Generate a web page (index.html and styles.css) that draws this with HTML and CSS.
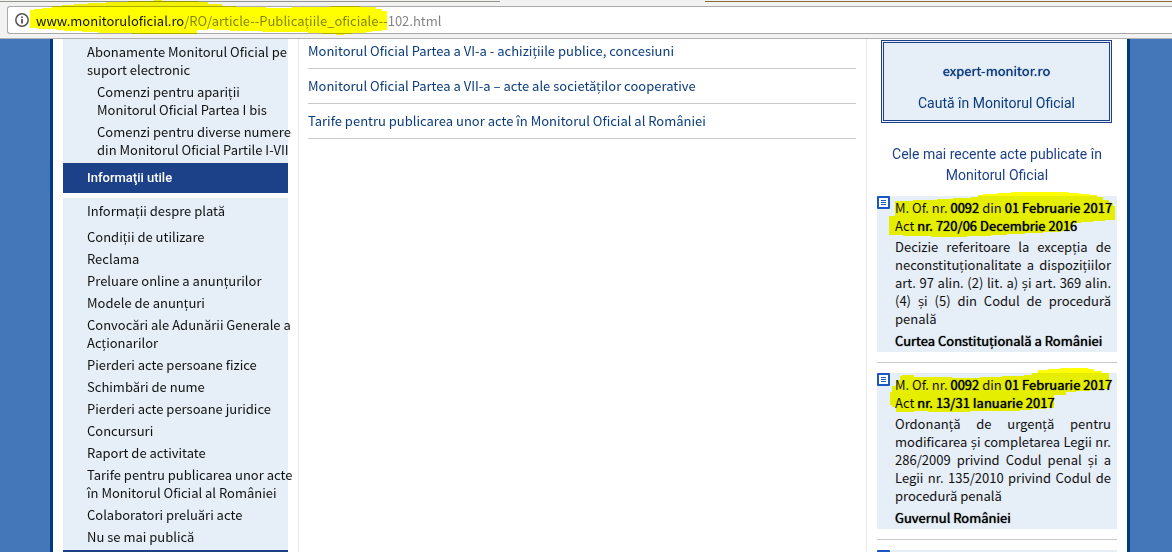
FILE: index.html
```
<!DOCTYPE html>
<html lang="ro">
<head>
    <meta charset="UTF-8">
    <meta name="viewport" content="width=device-width, initial-scale=1.0">
    <title>Monitorul Oficial</title>
    <link rel="stylesheet" href="styles.css">
</head>
<body>
    <header class="toolbar">
        <div class="tabs-edge"><span class="edge-left"></span><span class="edge-right"></span></div>
        <div class="omnibox">
            <svg class="info-icon" viewBox="0 0 14 14" aria-hidden="true">
                <circle cx="7" cy="7" r="6.2" fill="none" stroke="#555" stroke-width="1.5"/>
                <path d="M6.1 6h1.8v4.5H6.1zM6.1 3.4h1.8v1.7H6.1z" fill="#555"/>
            </svg>
            <input class="url" type="text" aria-label="Adresa" value="www.monitoruloficial.ro/RO/article--Publicațiile_oficiale--102.html">
        </div>
        <svg class="marker marker-url" viewBox="0 0 358 36" aria-hidden="true">
            <path d="M0 10H4V9H12V8H22V6H32V5H44V4H58V3H76V2H98V1H124V0H132V1H168V2H178V4H192V6H206V7H236V8H262V7H300V6H330V7H346V9H352V11H357V30H352V31H342V32H336V33H322V34H314V35H306V34H292V33H278V32H232V31H200V30H184V29H178V30H167V34H102V33H68V32H52V31H34V30H26V29H8V28H0Z"/>
        </svg>
    </header>

    <div class="viewport">
        <div class="page">
            <nav class="sidebar">
                <ul class="menu">
                    <li><a href="#">Abonamente Monitorul Oficial pe<br>suport electronic</a></li>
                    <li class="sub"><a href="#">Comenzi pentru apariţii<br>Monitorul Oficial Partea I bis</a></li>
                    <li class="sub"><a href="#">Comenzi pentru diverse numere<br>din Monitorul Oficial Partile I-VII</a></li>
                </ul>
                <h3 class="menu-title">Informaţii utile</h3>
                <ul class="menu">
                    <li class="spaced"><a href="#">Informaţii despre plată</a></li>
                    <li><a href="#">Condiţii de utilizare</a></li>
                    <li><a href="#">Reclama</a></li>
                    <li><a href="#">Preluare online a anunţurilor</a></li>
                    <li><a href="#">Modele de anunţuri</a></li>
                    <li><a href="#">Convocări ale Adunării Generale a<br>Acţionarilor</a></li>
                    <li><a href="#">Pierderi acte persoane fizice</a></li>
                    <li><a href="#">Schimbări de nume</a></li>
                    <li><a href="#">Pierderi acte persoane juridice</a></li>
                    <li><a href="#">Concursuri</a></li>
                    <li><a href="#">Raport de activitate</a></li>
                    <li><a href="#">Tarife pentru publicarea unor acte<br>în Monitorul Oficial al României</a></li>
                    <li><a href="#">Colaboratori preluări acte</a></li>
                    <li><a href="#">Nu se mai publică</a></li>
                </ul>
                <div class="menu-title"></div>
            </nav>

            <main class="content">
                <ul class="articles">
                    <li><a href="#">Monitorul Oficial Partea a VI-a - achiziţiile publice, concesiuni</a></li>
                    <li><a href="#">Monitorul Oficial Partea a VII-a – acte ale societăților cooperative</a></li>
                    <li><a href="#">Tarife pentru publicarea unor acte în Monitorul Oficial al României</a></li>
                </ul>
            </main>

            <aside class="right">
                <div class="search-box">
                    <a class="expert" href="#">expert-monitor.ro</a>
                    <a class="search-link" href="#">Caută în Monitorul Oficial</a>
                </div>
                <h2 class="recent-title">Cele mai recente acte publicate în<br>Monitorul Oficial</h2>

                <article class="act">
                    <svg class="act-icon" viewBox="0 0 13 13" aria-hidden="true">
                        <rect width="13" height="13" rx="1" fill="#1a56c4"/>
                        <path d="M2 2h9v9H2z" fill="#fff"/>
                        <path d="M4 4h5v1H4zM4 6h5v1H4zM4 8h5v1H4z" fill="#1a56c4"/>
                    </svg>
                    <p class="act-ref">M. Of. nr. <b>0092</b> din <b>01 Februarie 2017</b><br>Act <b>nr. 720/06 Decembrie 2016</b></p>
                    <p class="act-text">Decizie referitoare la excepţia de neconstituţionalitate a dispoziţiilor art. 97 alin. (2) lit. a) şi art. 369 alin. (4) şi (5) din Codul de procedură penală</p>
                    <p class="act-author">Curtea Constituţională a României</p>
                    <svg class="marker marker-first" viewBox="0 0 226 46" aria-hidden="true">
                        <path d="M6 9H24V8H48V7H64V6H82V5H89V3H94V2H108V1H122V0H180V1H190V2H200V3H208V5H214V8H220V11H224V14H226V28H216V29H204V30H192V31H184V33H181V39H172V40H154V41H136V42H118V43H102V44H78V45H42V44H14V43H0V24H6Z"/>
                    </svg>
                </article>

                <article class="act">
                    <svg class="act-icon" viewBox="0 0 13 13" aria-hidden="true">
                        <rect width="13" height="13" rx="1" fill="#1a56c4"/>
                        <path d="M2 2h9v9H2z" fill="#fff"/>
                        <path d="M4 4h5v1H4zM4 6h5v1H4zM4 8h5v1H4z" fill="#1a56c4"/>
                    </svg>
                    <p class="act-ref">M. Of. nr. <b>0092</b> din <b>01 Februarie 2017</b><br>Act <b>nr. 13/31 Ianuarie 2017</b></p>
                    <p class="act-text">Ordonanţă de urgenţă pentru modificarea şi completarea Legii nr. 286/2009 privind Codul penal şi a Legii nr. 135/2010 privind Codul de procedură penală</p>
                    <p class="act-author">Guvernul României</p>
                    <svg class="marker marker-second" viewBox="0 0 226 46" aria-hidden="true">
                        <path d="M12 7H24V9H62V10H90V9H112V8H134V7H142V5H148V2H158V1H170V0H198V1H204V3H212V5H219V21H212V22H200V23H186V24H176V27H164V40H156V41H142V42H130V43H80V44H38V43H24V44H6V39H2V37H0V24H2V18H6V12H10V8H12Z"/>
                    </svg>
                </article>

                <article class="act">
                    <svg class="act-icon" viewBox="0 0 13 13" aria-hidden="true">
                        <rect width="13" height="13" rx="1" fill="#1a56c4"/>
                        <path d="M2 2h9v9H2z" fill="#fff"/>
                    </svg>
                </article>
            </aside>
        </div>
    </div>
</body>
</html>
```

FILE: styles.css
```
* {
    box-sizing: border-box;
}
body {
    margin: 0;
    height: 100vh;
    display: flex;
    flex-direction: column;
    overflow: hidden;
    font-family: "Noto Sans CJK SC", "Open Sans", sans-serif;
    font-size: 13px;
    line-height: 18px;
    color: #111;
    background-color: #4476ba;
}
a {
    color: inherit;
    text-decoration: none;
}
ul, p, h2, h3 {
    margin: 0;
    padding: 0;
    list-style: none;
}

/* browser bar */
.toolbar {
    position: relative;
    flex: none;
    height: 39px;
    padding: 1px 0 0 7px;
    background-color: #f2f2f2;
    border-bottom: 1px solid #b2b2b2;
}
.tabs-edge {
    display: flex;
    justify-content: space-between;
    height: 5px;
    margin-left: -7px;
}
.edge-left {
    width: 500px;
    height: 1px;
    background-color: #92938c;
}
.edge-right {
    width: 467px;
    height: 1px;
    background-color: #8a6d3b;
}
.omnibox {
    display: flex;
    align-items: center;
    gap: 7px;
    height: 28px;
    padding-left: 7px;
    background-color: #fff;
    border: 1px solid #a9a9a9;
    border-right: 0;
    border-radius: 3px 0 0 3px;
}
.info-icon {
    width: 14px;
    height: 14px;
}
.url {
    flex: 1;
    height: 24px;
    padding: 0;
    border: 0;
    outline: 0;
    font-family: "Noto Sans CJK SC", "Open Sans", sans-serif;
    font-size: 13px;
    color: transparent;
    background: linear-gradient(to right, #111 149px, #808080 149px);
    -webkit-background-clip: text;
    background-clip: text;
}

/* yellow marker strokes */
.marker {
    position: absolute;
    fill: #ff0;
    mix-blend-mode: multiply;
    pointer-events: none;
}
.marker-url {
    left: 30px;
    top: 0;
    width: 358px;
    height: 36px;
}
.marker-first {
    left: 12px;
    top: -4px;
    width: 226px;
    height: 46px;
}
.marker-second {
    left: 13px;
    top: -5px;
    width: 226px;
    height: 46px;
}

/* page */
.viewport {
    flex: 1;
    min-height: 0;
    overflow: hidden;
    display: flex;
    padding: 0 42px 0 50px;
}
.page {
    flex: 1;
    display: grid;
    grid-template-columns: 225px 1fr 240px;
    gap: 10px;
    padding: 0 10px;
    background-color: #fff;
    border: solid #003a80;
    border-width: 0 3px;
}
.menu {
    padding: 2px 0;
    white-space: nowrap;
    background-color: #e6eef7;
}
.menu li {
    padding: 2px 0 2px 24px;
}
.menu .sub {
    padding-left: 34px;
}
.menu .spaced {
    margin-bottom: 4px;
}
.menu-title {
    height: 30px;
    margin-bottom: 5px;
    padding-left: 24px;
    font-family: Roboto, sans-serif;
    font-size: 13px;
    line-height: 30px;
    font-weight: 500;
    color: #fff;
    background-color: #1d4189;
}

.content {
    padding: 0 10px 0 9px;
    border: solid #e8e8e8;
    border-width: 0 1px;
}
.articles {
    margin-top: -5px;
}
.articles li {
    padding: 8px 0;
    border-bottom: 1px solid #c8c8c8;
    color: #0b3c7d;
}

.search-box {
    display: flex;
    flex-direction: column;
    gap: 13px;
    margin: 1px 5px 21px 4px;
    padding: 19px 0 6px;
    text-align: center;
    color: #0b3c7d;
    background-color: #e6eef7;
    border: 3px double #1d4189;
}
.search-link, .recent-title {
    font-family: Roboto, sans-serif;
    font-size: 14px;
    font-weight: normal;
    line-height: 21px;
}
.recent-title {
    margin-bottom: 10px;
    text-align: center;
    white-space: nowrap;
    color: #1d4189;
}

.act {
    position: relative;
    min-height: 20px;
    padding: 3px 6px 2px 18px;
    background-color: #e6eef7;
}
.act + .act {
    margin-top: 21px;
}
.act + .act::before {
    content: "";
    position: absolute;
    left: 0;
    right: 0;
    top: -11px;
    height: 1px;
    background-color: #c8c8c8;
}
.act-icon {
    position: absolute;
    left: 0;
    top: 0;
    width: 13px;
    height: 13px;
}
.act-ref {
    white-space: nowrap;
}
.act b, .act-author, .expert {
    font-weight: normal;
    text-shadow: 0 0 1px currentColor;
}
.act b, .act-author {
    color: #000;
}
.act-text {
    margin: 3px 0 4px;
    text-align: justify;
}
```
